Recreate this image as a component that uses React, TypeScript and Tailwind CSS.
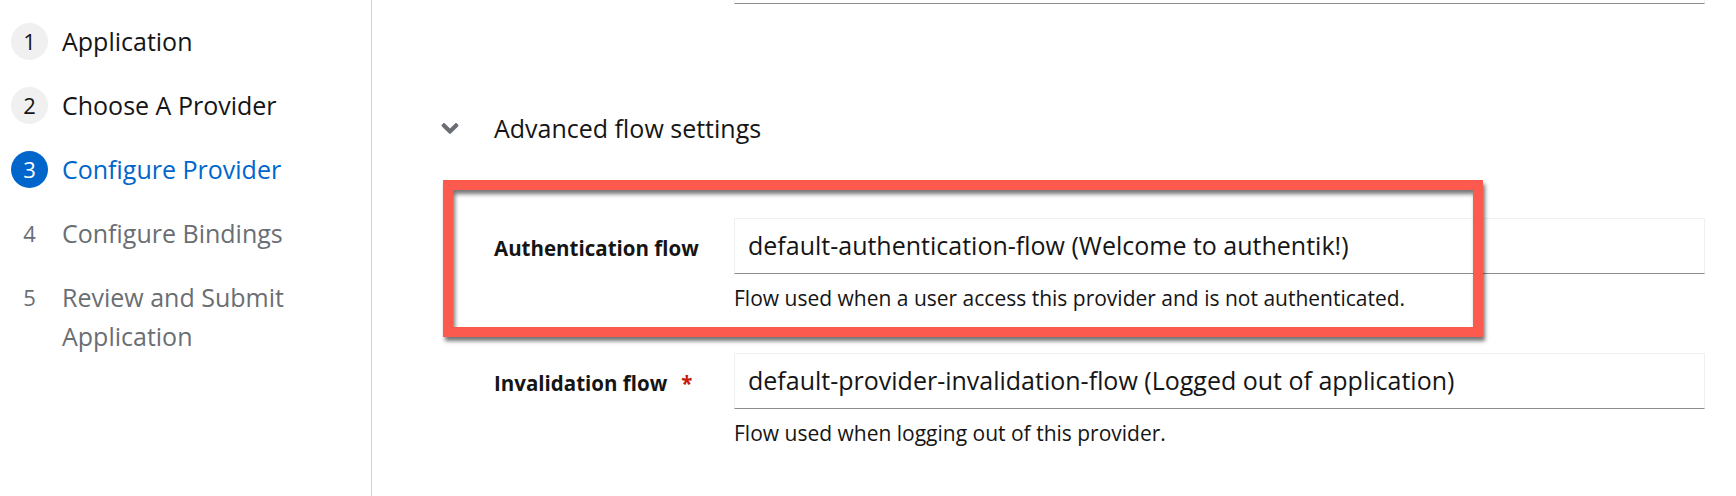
import { FaAngleDown } from 'react-icons/fa'

type Step = {
  n: number
  label: string
  state: 'done' | 'current' | 'todo'
}

const steps: Step[] = [
  { n: 1, label: 'Application', state: 'done' },
  { n: 2, label: 'Choose A Provider', state: 'done' },
  { n: 3, label: 'Configure Provider', state: 'current' },
  { n: 4, label: 'Configure Bindings', state: 'todo' },
  { n: 5, label: 'Review and Submit Application', state: 'todo' },
]

function StepItem({ step }: { step: Step }) {
  const circle =
    step.state === 'current'
      ? 'bg-[#0066cc] text-white'
      : step.state === 'done'
        ? 'bg-[#f0f0f0] text-[#151515]'
        : 'text-[#6a6e73]'
  const text =
    step.state === 'current' ? 'text-[#0066cc]' : step.state === 'done' ? 'text-[#151515]' : 'text-[#6a6e73]'
  return (
    <li className="flex items-start">
      <div className="w-[62px] h-[39px] flex items-center pl-[11px]">
        <span className={`w-[37px] h-[37px] rounded-full flex items-center justify-center text-[22px] ${circle}`}>
          {step.n}
        </span>
      </div>
      <span className={`w-[270px] text-[25px] leading-[39px] ${text}`}>{step.label}</span>
    </li>
  )
}

function Field({
  label,
  value,
  help,
  required,
}: {
  label: string
  value: string
  help: string
  required?: boolean
}) {
  return (
    <div className="grid grid-cols-[240px_1fr]">
      <div className="pt-[15px] text-[20.5px] leading-[30px] font-bold text-[#151515]">
        {label}
        {required && <span className="ml-[14px] text-[#c9190b]">*</span>}
      </div>
      <div>
        <div className="h-[56px] flex items-center pl-[13px] bg-white border border-[#f0f0f0] border-b-[#8a8d90] text-[25px] text-[#151515]">
          {value}
        </div>
        <p className="mt-[9px] text-[21px] leading-[30px] text-[#151515]">{help}</p>
      </div>
    </div>
  )
}

export default function App() {
  return (
    <div
      className="relative flex w-[1736px] h-[496px] overflow-hidden bg-white"
      style={{ fontFamily: '"Open Sans", "Noto Sans", sans-serif' }}
    >
      <nav className="w-[372px] shrink-0 border-r border-[#d2d2d2] pt-[22px]">
        <ol className="flex flex-col gap-[25px]">
          {steps.map((s) => (
            <StepItem key={s.n} step={s} />
          ))}
        </ol>
      </nav>

      <main className="flex-1">
        <div className="ml-[362px] mr-[31px] h-[4px] border-x border-b border-x-[#f0f0f0] border-b-[#8a8d90]" />

        <div className="mt-[106px] flex items-center pl-[66px] h-[36px]">
          <span className="w-[24px] flex justify-center text-[#6a6e73]">
            <FaAngleDown size={27} />
          </span>
          <span className="ml-[32px] text-[25px] leading-[36px] text-[#151515]">Advanced flow settings</span>
        </div>

        <div className="mt-[72px] ml-[122px] mr-[31px] flex flex-col gap-[40px]">
          <Field
            label="Authentication flow"
            value="default-authentication-flow (Welcome to authentik!)"
            help="Flow used when a user access this provider and is not authenticated."
          />
          <Field
            label="Invalidation flow"
            required
            value="default-provider-invalidation-flow (Logged out of application)"
            help="Flow used when logging out of this provider."
          />
        </div>
      </main>

      {/* screenshot annotation */}
      <div className="absolute left-[443px] top-[180px] w-[1040px] h-[157px] border-[10px] border-[#fd5a4f] shadow-[2px_4px_4px_rgba(0,0,0,0.55),inset_2px_4px_4px_rgba(0,0,0,0.55)]" />
    </div>
  )
}
